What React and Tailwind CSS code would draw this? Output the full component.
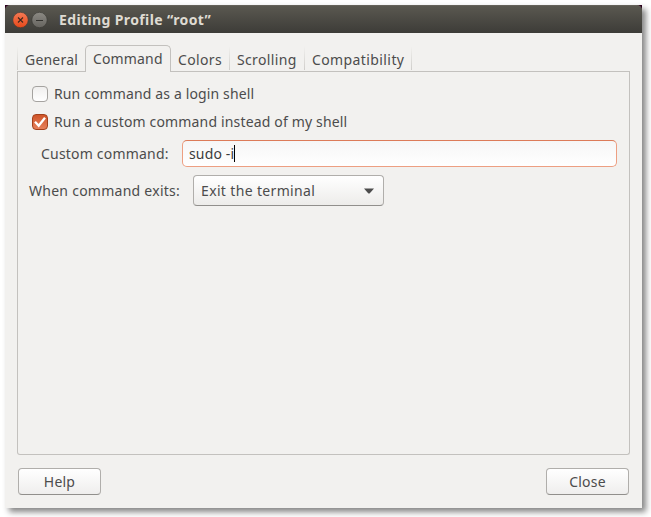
const line = 'border-[#c3c1be]';

function TitleBar() {
  return (
    <header className="flex h-7 shrink-0 bg-[#2c001e]">
      <div className="flex flex-1 items-center rounded-t-[5px] border-t border-[#65625a] bg-linear-to-b from-[#5a5850] to-[#3d3c38] pl-2">
        <svg width="40" height="18" viewBox="0 0 40 18" className="shrink-0">
          <defs>
            <linearGradient id="close" x1="0" y1="0" x2="0" y2="1">
              <stop offset="0" stopColor="#f47a55" />
              <stop offset="1" stopColor="#e8491a" />
            </linearGradient>
            <linearGradient id="min" x1="0" y1="0" x2="0" y2="1">
              <stop offset="0" stopColor="#8c8a84" />
              <stop offset="1" stopColor="#66645f" />
            </linearGradient>
          </defs>
          <circle cx="7.5" cy="9" r="7.7" fill="url(#close)" stroke="#3a3834" strokeWidth="0.6" />
          <path d="M5 6.5l5 5m0-5l-5 5" stroke="#40271c" strokeWidth="1.1" fill="none" />
          <circle cx="26.5" cy="9" r="7.7" fill="url(#min)" stroke="#363530" strokeWidth="0.6" />
          <path d="M23 9.5h7" stroke="#33322e" strokeWidth="1" />
        </svg>
        <h1 className="ml-[6px] text-[14px] leading-4 font-bold tracking-[0.38px] whitespace-nowrap text-[#dfdbd2]">
          Editing Profile “root”
        </h1>
      </div>
    </header>
  );
}

function Divider() {
  return <i className="h-6 w-px shrink-0 bg-linear-to-b from-transparent to-[#cfcdca]" />;
}

function Tabs() {
  return (
    <nav className="flex h-[27px] shrink-0 items-end">
      <div className={`flex h-[26px] w-[68px] border-b ${line}`}>
        <Divider />
        <span className="pt-[4px] pl-[7px] leading-5 tracking-[0.2px]">General</span>
      </div>
      <div className={`h-[27px] w-[86px] rounded-t-[5px] border border-b-0 ${line} pt-[3px] pl-[7px] leading-5 tracking-[0.15px]`}>
        Command
      </div>
      <div className={`flex h-[26px] flex-1 border-b ${line}`}>
        <span className="w-[58px] pt-[4px] pl-[7px] leading-5 tracking-[0.35px]">Colors</span>
        <Divider />
        <span className="w-[74px] pt-[4px] pl-[7px] leading-5 tracking-[0.35px]">Scrolling</span>
        <Divider />
        <span className="w-[106px] pt-[4px] pl-[7px] leading-5 tracking-[0.4px]">Compatibility</span>
        <Divider />
      </div>
    </nav>
  );
}

function Button({ children }) {
  return (
    <button className="h-[27px] w-[83px] rounded-[4px] border border-[#b0aeab] border-b-[#918f8c] bg-linear-to-b from-white to-[#efeeed] text-center leading-[25px] tracking-[0.2px]">
      {children}
    </button>
  );
}

export default function App() {
  return (
    <div className="h-[517px] w-[651px] overflow-hidden bg-white pt-[5px] pl-[5px] font-['Noto_Sans','Open_Sans',sans-serif] text-[14px] text-[#4c4c4c]">
      <main className="flex h-[503px] w-[637px] flex-col bg-[#f2f1ef] shadow-[4px_4px_6px_rgba(0,0,0,0.48)]">
        <TitleBar />
        <div className="flex flex-1 flex-col px-3 pt-3">
          <Tabs />
          <section className={`flex h-[383px] shrink-0 flex-col rounded-b-[3px] border border-t-0 ${line} pt-3`}>
            <label className="flex h-5 items-center pl-[14px]">
              <span className="size-4 rounded-[4px] border border-[#a5a3a0] bg-linear-to-b from-[#f0efee] to-white" />
              <span className="ml-[6px] leading-5 tracking-[0.13px]">Run command as a login shell</span>
            </label>
            <label className="mt-2 flex h-5 items-center pl-[14px]">
              <span className="size-4 rounded-[4px] border border-[#a3401c] bg-linear-to-b from-[#cf5428] to-[#e6805a]">
                <svg width="14" height="14" viewBox="0 0 14 14">
                  <path d="M2 6.8l3.7 4L12 2.8" stroke="white" strokeWidth="2.3" fill="none" />
                </svg>
              </span>
              <span className="ml-[6px] leading-5 tracking-[0.16px]">Run a custom command instead of my shell</span>
            </label>
            <div className="mt-2 flex h-[27px] items-center pr-3 pl-[23px]">
              <span className="w-[141px] leading-5 tracking-[0.2px]">Custom command:</span>
              <div className="flex h-[27px] flex-1 items-center rounded-[5px] border border-[#ed9f82] border-t-[#dc7b59] bg-linear-to-b from-[#f6f6f6] to-white pl-[6px] text-[#3c3c3c]">
                <span className="leading-5 tracking-[0.14px]">sudo -i</span>
                <i className="h-[17px] w-px bg-black" />
              </div>
            </div>
            <div className="mt-2 flex h-[31px] items-center pl-[11px]">
              <span className="w-[164px] leading-5 tracking-[0.26px]">When command exits:</span>
              <button className="flex h-[31px] w-[191px] items-center justify-between rounded-[4px] border border-[#b0aeab] border-b-[#918f8c] bg-linear-to-b from-white to-[#edecea] pr-[9px] pl-[7px]">
                <span className="leading-5 tracking-[0.35px]">Exit the terminal</span>
                <svg width="10" height="6" viewBox="0 0 10 6">
                  <path d="M0 .5h10L5.8 5.2Q5 6 4.2 5.2Z" fill="#4c4c4c" />
                </svg>
              </button>
            </div>
          </section>
          <footer className="mt-[13px] flex justify-between px-px">
            <Button>Help</Button>
            <Button>Close</Button>
          </footer>
        </div>
      </main>
    </div>
  );
}
